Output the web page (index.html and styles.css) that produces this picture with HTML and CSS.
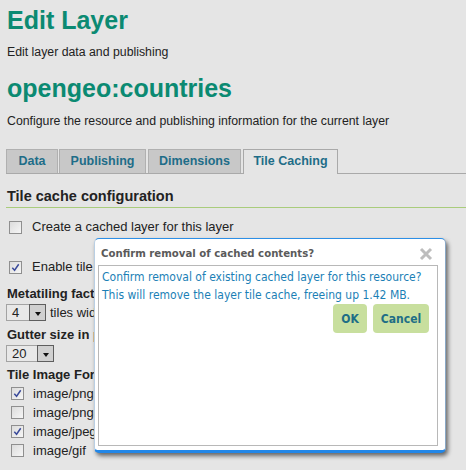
FILE: index.html
```html
<!DOCTYPE html>
<html>
<head>
<meta charset="utf-8">
<link rel="stylesheet" href="styles.css">
</head>
<body>
<div class="page">
  <h1 class="title">Edit Layer</h1>
  <p class="sub">Edit layer data and publishing</p>
  <h2 class="layer">opengeo:countries</h2>
  <p class="desc">Configure the resource and publishing information for the current layer</p>

  <div class="tabs">
    <div class="tab t-data">Data</div>
    <div class="tab t-pub">Publishing</div>
    <div class="tab t-dim">Dimensions</div>
    <div class="tab t-tile active">Tile Caching</div>
  </div>

  <h3 class="section">Tile cache configuration</h3>

  <label class="row first"><span class="cb"></span>Create a cached layer for this layer</label>
  <label class="row second"><span class="cb checked"><svg viewBox="0 0 12 12"><path d="M2.5 6.2 L5 9 L9.5 2.5" /></svg></span>Enable tile caching for this layer</label>

  <div class="field-label meta">Metatiling factors</div>
  <div class="inline">
    <div class="select s4"><span class="val">4</span><span class="btn"><i></i></span></div>
    <span class="after">tiles wide by</span>
  </div>

  <div class="field-label">Gutter size in pixels</div>
  <div class="inline">
    <div class="select s20"><span class="val">20</span><span class="btn"><i></i></span></div>
  </div>

  <div class="field-label formats-label">Tile Image Formats</div>
  <div class="formats">
    <label class="fmt"><span class="cb checked"><svg viewBox="0 0 12 12"><path d="M2.5 6.2 L5 9 L9.5 2.5" /></svg></span>image/png</label>
    <label class="fmt"><span class="cb"></span>image/png8</label>
    <label class="fmt"><span class="cb checked"><svg viewBox="0 0 12 12"><path d="M2.5 6.2 L5 9 L9.5 2.5" /></svg></span>image/jpeg</label>
    <label class="fmt"><span class="cb"></span>image/gif</label>
  </div>
</div>

<div class="dialog">
  <div class="dlg-head">
    <span class="dlg-title">Confirm removal of cached contents?</span>
    <svg class="close" viewBox="0 0 14 14"><path d="M2 2 L12 12 M12 2 L2 12" /></svg>
  </div>
  <div class="dlg-body">
    <p class="msg">Confirm removal of existing cached layer for this resource?<br>This will remove the layer tile cache, freeing up 1.42 MB.</p>
    <div class="actions">
      <button class="b ok">OK</button>
      <button class="b cancel">Cancel</button>
    </div>
  </div>
</div>
</body>
</html>
```

FILE: styles.css
```css
html, body {
  margin: 0;
  padding: 0;
  background: #e5e5e5;
}
body {
  font-family: "Liberation Sans", Arial, sans-serif;
  color: #222;
  width: 466px;
  height: 470px;
  overflow: hidden;
  position: relative;
}
.page {
  padding: 5px 0 0 6px;
}
.title {
  margin: 0 0 0 1px;
  font-size: 25px;
  line-height: 30px;
  font-weight: bold;
  color: #0b8a72;
}
.sub {
  margin: 10px 0 0 1px;
  font-size: 12.3px;
  line-height: 15px;
}
.layer {
  margin: 14px 0 0 1px;
  font-size: 25px;
  line-height: 28px;
  font-weight: bold;
  color: #0b8a72;
}
.desc {
  margin: 12px 0 0 1px;
  font-size: 12.3px;
  line-height: 15px;
}
.tabs {
  margin-top: 20px;
  display: flex;
  align-items: flex-end;
  border-bottom: 1px solid #a9a9a9;
  height: 24px;
}
.tab {
  box-sizing: border-box;
  height: 24px;
  background: #c8c8c8;
  border: 1px solid #b0b0b0;
  border-bottom: none;
  font-size: 12.5px;
  font-weight: bold;
  line-height: 23px;
  text-align: center;
  color: #1e6d88;
  flex: none;
}
.t-data { width: 52px; margin-right: 1px; }
.t-pub { width: 87px; margin-right: 2px; }
.t-dim { width: 93px; margin-right: 2px; }
.tab.active {
  width: 95px;
  background: #e5e5e5;
  border-color: #a9a9a9;
  height: 25px;
  margin-bottom: -1px;
}
.section {
  margin: 13px 0 0 0;
  padding: 0 0 2px 1px;
  font-size: 14.5px;
  line-height: 18px;
  font-weight: bold;
  color: #222;
  border-bottom: 1px solid #a9cc7c;
}
.row {
  display: flex;
  align-items: center;
  font-size: 13px;
  line-height: 16px;
  padding-left: 3px;
}
.row .cb { margin-right: 10px; }
.first { margin-top: 11px; }
.second { margin-top: 24px; }
.cb {
  box-sizing: border-box;
  display: inline-block;
  width: 13px;
  height: 13px;
  border: 1px solid #8f8f8f;
  background: linear-gradient(135deg, #dcdcdc, #f6f6f6);
  position: relative;
  flex: none;
}
.cb svg {
  position: absolute;
  left: 0;
  top: 0;
  width: 11px;
  height: 11px;
}
.cb svg path {
  fill: none;
  stroke: #3a4a9a;
  stroke-width: 1.6;
}
.field-label {
  margin-top: 6px;
  font-size: 13px;
  line-height: 15px;
  font-weight: bold;
  color: #222;
  padding-left: 1px;
}
.field-label.meta { margin-top: 11px; }
.field-label.formats-label { margin-top: 5px; }
.inline {
  margin-top: 3px;
  display: flex;
  align-items: center;
  height: 17px;
}
.select {
  box-sizing: border-box;
  height: 17px;
  border: 1px solid #a3a3a3;
  display: flex;
  align-items: stretch;
  justify-content: space-between;
  background: #e8e8e8;
}
.s4 { width: 40px; }
.s20 { width: 48px; }
.select .val {
  font-size: 13px;
  line-height: 15px;
  padding-left: 5px;
  color: #222;
}
.select .btn {
  box-sizing: border-box;
  width: 17px;
  border: 1px solid #5e5e5e;
  background: #d0d0d0;
  margin: -1px -1px -1px 0;
  display: flex;
  align-items: center;
  justify-content: center;
}
.select .btn i {
  width: 0;
  height: 0;
  border-left: 3px solid transparent;
  border-right: 3px solid transparent;
  border-top: 4px solid #111;
  margin-top: 2px;
}
.after {
  font-size: 13px;
  margin-left: 4px;
}
.formats {
  margin-top: 2px;
  padding-left: 5px;
}
.fmt {
  display: flex;
  align-items: center;
  height: 19px;
  line-height: 15px;
  font-size: 13px;
}
.fmt .cb { margin-right: 9px; }

.dialog {
  position: absolute;
  left: 94px;
  top: 238px;
  width: 352px;
  height: 215px;
  box-sizing: border-box;
  background: #fff;
  border: 1px solid #2d8fe6;
  border-left-color: #b9cfe4;
  border-right-color: #8aa8c6;
  border-bottom: 3px solid #2287e8;
  border-radius: 5px;
  box-shadow: 2px 3px 4px rgba(0, 0, 0, 0.55);
  padding: 0 7px 4px 3px;
  display: flex;
  flex-direction: column;
}
.dlg-head {
  height: 26px;
  display: flex;
  align-items: center;
  justify-content: space-between;
  padding-left: 3px;
}
.dlg-title {
  font-family: "DejaVu Sans Condensed", "DejaVu Sans", sans-serif;
  font-weight: bold;
  font-size: 11.3px;
  color: #5a5a5a;
  margin-top: 2px;
}
.close {
  width: 14px;
  height: 14px;
  margin-right: 5px;
  margin-top: 3px;
}
.close path {
  stroke: #bdbdbd;
  stroke-width: 3;
  fill: none;
}
.dlg-body {
  flex: 1;
  border: 1px solid #b8b8b8;
  padding: 2px 3px;
}
.msg {
  margin: 0;
  font-family: "DejaVu Sans Condensed", "DejaVu Sans", sans-serif;
  font-size: 12px;
  line-height: 18px;
  color: #1b7fb6;
}
.actions {
  display: flex;
  justify-content: flex-end;
  gap: 6px;
  margin-top: 0;
  padding-right: 5px;
}
.b {
  border: none;
  background: #c8df9e;
  border-radius: 4px;
  height: 29px;
  font-family: "DejaVu Sans Condensed", "DejaVu Sans", sans-serif;
  font-weight: bold;
  font-size: 12px;
  color: #1e6e86;
  padding: 0;
}
.ok { width: 34px; }
.cancel { width: 56px; }
```
